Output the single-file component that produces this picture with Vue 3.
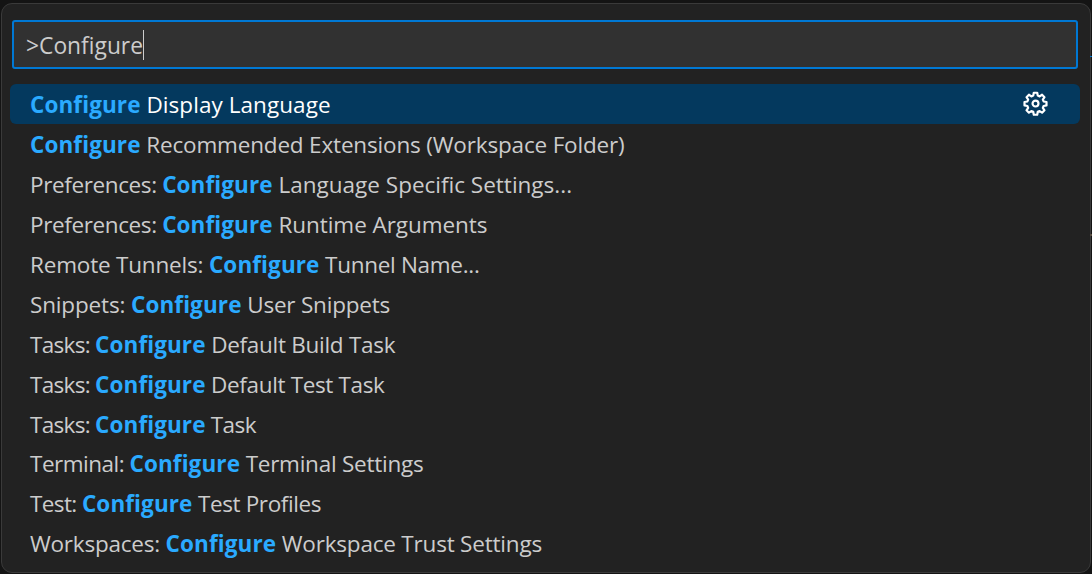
<script setup>
const rows = [
  { pre: '', post: ' Display Language', postLs: 0.06, active: true },
  { pre: '', post: ' Recommended Extensions (Workspace Folder)', postLs: -0.17 },
  { pre: 'Preferences: ', ls: -0.38, post: ' Language Specific Settings...', postLs: 0 },
  { pre: 'Preferences: ', ls: -0.38, post: ' Runtime Arguments', postLs: -0.06 },
  { pre: 'Remote Tunnels: ', ls: -0.19, post: ' Tunnel Name...', postLs: -0.29 },
  { pre: 'Snippets: ', ls: -0.15, post: ' User Snippets', postLs: -0.2 },
  { pre: 'Tasks: ', ls: -0.7, post: ' Default Build Task', postLs: -0.28 },
  { pre: 'Tasks: ', ls: -0.7, post: ' Default Test Task', postLs: -0.35 },
  { pre: 'Tasks: ', ls: -0.7, post: ' Task', postLs: -0.6 },
  { pre: 'Terminal: ', ls: -0.5, post: ' Terminal Settings', postLs: -0.25 },
  { pre: 'Test: ', ls: -0.6, post: ' Test Profiles', postLs: -0.38 },
  { pre: 'Workspaces: ', ls: -0.22, post: ' Workspace Trust Settings', postLs: -0.2 },
]
</script>

<template>
  <div class="page">
    <div class="panel">
      <div class="input">
        <span class="value">&gt;Configure</span><span class="caret"></span>
      </div>
      <ul class="list">
        <li v-for="(r, i) in rows" :key="i" class="row" :class="{ active: r.active }">
          <span class="label"><span v-if="r.pre" :style="{ letterSpacing: r.ls + 'px' }">{{ r.pre }}</span><b class="hl">Configure</b><span :style="{ letterSpacing: r.postLs + 'px' }">{{ r.post }}</span></span>
          <svg v-if="r.active" class="gear" viewBox="0 0 16 16" fill="none" stroke="#fff" stroke-width="1.4" stroke-linejoin="round">
            <path d="M6.9 1.1h2.2l.35 1.85 1.2.5 1.55-1.06 1.55 1.55-1.06 1.55.5 1.2 1.85.35v2.2l-1.85.35-.5 1.2 1.06 1.55-1.55 1.55-1.55-1.06-1.2.5-.35 1.85H6.9l-.35-1.85-1.2-.5L3.8 13.89l-1.55-1.55 1.06-1.55-.5-1.2L.96 9.24v-2.2l1.85-.35.5-1.2L2.25 3.94 3.8 2.39l1.55 1.06 1.2-.5z"/>
            <circle cx="8" cy="8" r="1.9"/>
          </svg>
        </li>
      </ul>
    </div>
    <i class="tick tick-blue"></i>
    <i class="tick tick-brown"></i>
  </div>
</template>

<style>
html, body { margin: 0; background: #141414; }
</style>

<style scoped>
.page {
  position: relative;
  width: 1092px;
  height: 574px;
  box-sizing: border-box;
  padding: 3px 1px 1px;
  background: #141414;
  overflow: hidden;
}
.panel {
  box-sizing: border-box;
  height: 570px;
  background: #222222;
  border: 1px solid #3a3a3a;
  border-radius: 11px;
  padding: 16px 10px 0 8px;
  font-family: "Open Sans", "Noto Sans", sans-serif;
}
.input {
  box-sizing: border-box;
  height: 49px;
  margin: 0 2px;
  border: 2px solid #0078d4;
  border-radius: 3px;
  background: #313131;
  display: flex;
  align-items: center;
  padding: 0 0 0 12px;
  color: #cccccc;
  font-size: 22.8px;
}
.value {
  padding-top: 2px;
}
.caret {
  width: 1px;
  height: 30px;
  background: #cccccc;
}
.list {
  list-style: none;
  margin: 15px 0 0;
  padding: 0;
}
.row {
  box-sizing: border-box;
  height: 39.9px;
  display: flex;
  align-items: center;
  justify-content: space-between;
  padding: 2px 32px 0 20px;
  border-radius: 6px;
  color: #cccccc;
  font-size: 22.5px;
  white-space: pre;
}
.row.active {
  background: #04395e;
  color: #ffffff;
}
.label {
  display: block;
}
.hl {
  color: #2aaaff;
  font-weight: 700;
  letter-spacing: 0.1px;
}
.gear {
  width: 25px;
  height: 25px;
  margin-top: -2px;
}
.tick {
  position: absolute;
  right: 0;
  width: 2px;
}
.tick-blue {
  top: 56px;
  height: 1px;
  background: #0078d4;
}
.tick-brown {
  top: 234px;
  height: 2px;
  background: #5a4f42;
}
</style>
